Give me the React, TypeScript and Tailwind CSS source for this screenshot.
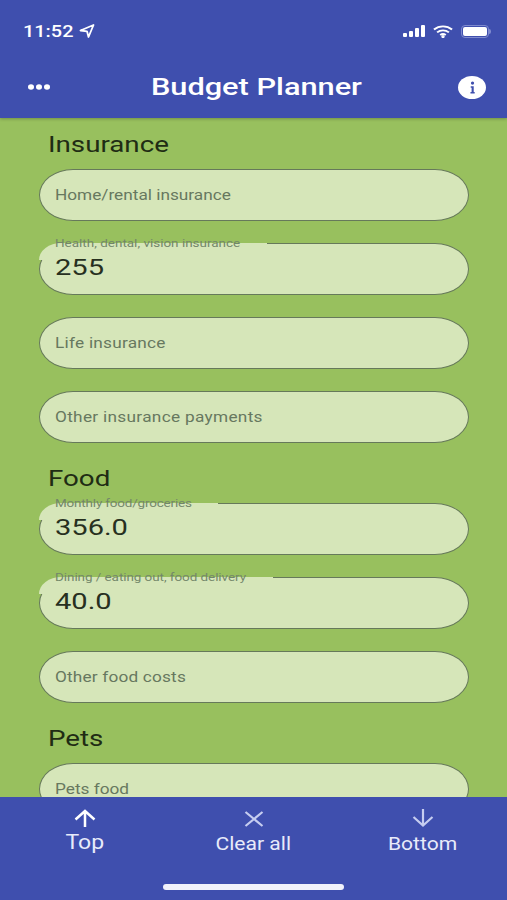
import React from "react";

function Field({ label, value, notch, track = "" }: { label: string; value?: string; notch?: number; track?: string }) {
  if (value) {
    return (
      <div className="relative h-[52px] rounded-[34px/26px] border-[1.5px] border-[#66795a] bg-[#d6e6b9]">
        <div className="absolute -left-[1.5px] -top-[1.5px] h-[17px] rounded-tl-[34px_26px] bg-[#d6e6b9]" style={{ width: notch }} />
        <div className={`absolute left-[14.5px] top-[-7px] origin-left scale-x-[1.225] whitespace-nowrap text-[11px] leading-[14px] text-[#73866a] ${track}`}>{label}</div>
        <div className="absolute left-[14.5px] top-[9px] origin-left scale-x-[1.32] text-[22px] leading-[30px] text-[#27301f]">{value}</div>
      </div>
    );
  }
  return (
    <div className="flex h-[52px] items-center rounded-[34px/26px] border-[1.5px] border-[#66795a] bg-[#d6e6b9] pl-[14.5px]">
      <span className={`origin-left scale-x-[1.23] whitespace-nowrap text-[14px] text-[#67785f] ${track}`}>{label}</span>
    </div>
  );
}

function Heading({ children, mt }: { children: string; mt: string }) {
  return (
    <h2 className={`pl-[9px] text-[22px] leading-[26px] font-normal text-[#1f2c14] ${mt}`}>
      <span className="inline-block origin-left scale-x-[1.26]">{children}</span>
    </h2>
  );
}

function BottomItem({ label, large, children }: { label: string; large?: boolean; children: React.ReactNode }) {
  return (
    <div className="flex w-[169px] flex-col items-center">
      <div className="h-[24px]">{children}</div>
      <span className={`whitespace-nowrap text-[#e8ebfa] ${large ? "-mt-[1px] scale-x-[1.15] text-[20px] leading-[26px]" : "mt-[1px] scale-x-[1.17] text-[18px] leading-[26px]"}`}>{label}</span>
    </div>
  );
}

export default function App() {
  return (
    <div className="flex h-[900px] w-[507px] flex-col overflow-hidden bg-[#98c05e] font-['Roboto',sans-serif]">
      <header className="relative z-10 h-[118px] shrink-0 bg-[#3f4fae] text-white shadow-[0_1px_3px_rgba(0,0,0,0.25)]">
        <div className="flex h-[62px] items-center justify-between pl-[23px] pr-[16px]">
          <div className="flex items-center">
            <span className="mt-[1px] inline-block w-[56px] origin-left scale-x-[1.17] text-[17px] font-medium">11:52</span>
            <svg width="16" height="14" viewBox="0 0 16 14" fill="none" stroke="white" strokeWidth="1.8" strokeLinejoin="round">
              <path d="M14.500 1 1.500 6.500 8 7.300 9.500 13Z" />
            </svg>
          </div>
          <div className="flex items-center gap-[8px]">
            <svg width="22" height="12" viewBox="0 0 22 12" fill="white">
              <rect x="0" y="8" width="4" height="4" rx="1" />
              <rect x="6" y="6" width="4" height="6" rx="1" />
              <rect x="12" y="3" width="4" height="9" rx="1" />
              <rect x="18" y="0" width="4" height="12" rx="1" />
            </svg>
            <svg width="20" height="13" viewBox="0 0 21 15" fill="none" stroke="white" strokeWidth="2.200" preserveAspectRatio="none">
              <path d="M1 5.200C6.500.4 14.500.4 20 5.200" />
              <path d="M4.300 8.500c3.600-3 8.800-3 12.400 0" />
              <path d="M7.600 11.500c1.700-1.300 4.100-1.300 5.800 0" />
              <circle cx="10.500" cy="13.300" r="0.700" fill="white" />
            </svg>
            <div className="flex items-center">
              <div className="flex h-[13px] w-[28px] items-center justify-center rounded-[4px] border border-[#7f8ace]">
                <div className="h-[9px] w-[24px] rounded-[2px] bg-white" />
              </div>
              <div className="h-[5px] w-[2px] rounded-r-sm bg-[#7f8ace]" />
            </div>
          </div>
        </div>
        <div className="flex h-[50px] items-center justify-between pl-[28px] pr-[21px]">
          <svg width="22" height="6" viewBox="0 0 22 6" fill="white">
            <ellipse cx="3" cy="3" rx="3" ry="2.700" />
            <ellipse cx="11" cy="3" rx="3" ry="2.700" />
            <ellipse cx="19" cy="3" rx="3" ry="2.700" />
          </svg>
          <h1 className="ml-[5px] scale-x-[1.28] text-[24px] font-medium">Budget Planner</h1>
          <div className="relative flex h-[23px] w-[28px] items-center justify-center rounded-[50%] bg-white">
            <svg width="5" height="13" viewBox="0 0 6 16" fill="#3f4fae">
              <circle cx="3" cy="2.500" r="2" />
              <path d="M.8 6.500h3.700v7h1.200v1.800H.5v-1.800h1.400V8.300H.8Z" />
            </svg>
          </div>
        </div>
      </header>

      <main className="min-h-0 flex-1 overflow-hidden pl-[39px] pr-[38px]">
        <Heading mt="mt-[14px]">Insurance</Heading>
        <div className="mt-[11px] flex flex-col gap-[22px]">
          <Field label="Home/rental insurance" />
          <Field label="Health, dental, vision insurance" value="255" notch={228} />
          <Field label="Life insurance" track="tracking-[0.2px]" />
          <Field label="Other insurance payments" track="tracking-[0.25px]" />
        </div>
        <Heading mt="mt-[23px]">Food</Heading>
        <div className="mt-[11px] flex flex-col gap-[22px]">
          <Field label="Monthly food/groceries" value="356.0" notch={179} track="-tracking-[0.15px]" />
          <Field label="Dining / eating out, food delivery" value="40.0" notch={234} track="-tracking-[0.05px]" />
          <Field label="Other food costs" track="tracking-[0.15px]" />
        </div>
        <Heading mt="mt-[23px]">Pets</Heading>
        <div className="mt-[11px]">
          <Field label="Pets food" />
        </div>
      </main>

      <footer className="relative z-10 h-[103px] shrink-0 bg-[#3f4fae]">
        <div className="flex pt-[9px]">
          <BottomItem label="Top" large>
            <svg className="mt-[3px] text-white" width="22" height="18" viewBox="0 0 22 18" fill="none" stroke="currentColor" strokeWidth="2.500">
              <path d="M11 18V2M1.500 10.500 11 2l9.500 8.500" />
            </svg>
          </BottomItem>
          <BottomItem label="Clear all">
            <svg className="mt-[5px] text-[#c6cdf0]" width="20" height="16" viewBox="0 0 20 16" fill="none" stroke="currentColor" strokeWidth="2.200">
              <path d="M1.500 1 18.500 15M18.500 1 1.500 15" />
            </svg>
          </BottomItem>
          <BottomItem label="Bottom">
            <svg className="mt-[3px] text-[#c6cdf0]" width="22" height="18" viewBox="0 0 22 18" fill="none" stroke="currentColor" strokeWidth="2.200">
              <path d="M11 0v16.500M1.500 8 11 16.500 20.500 8" />
            </svg>
          </BottomItem>
        </div>
        <div className="mx-auto mt-[27px] h-[6px] w-[181px] rounded-full bg-[#f1f2fb]" />
      </footer>
    </div>
  );
}
